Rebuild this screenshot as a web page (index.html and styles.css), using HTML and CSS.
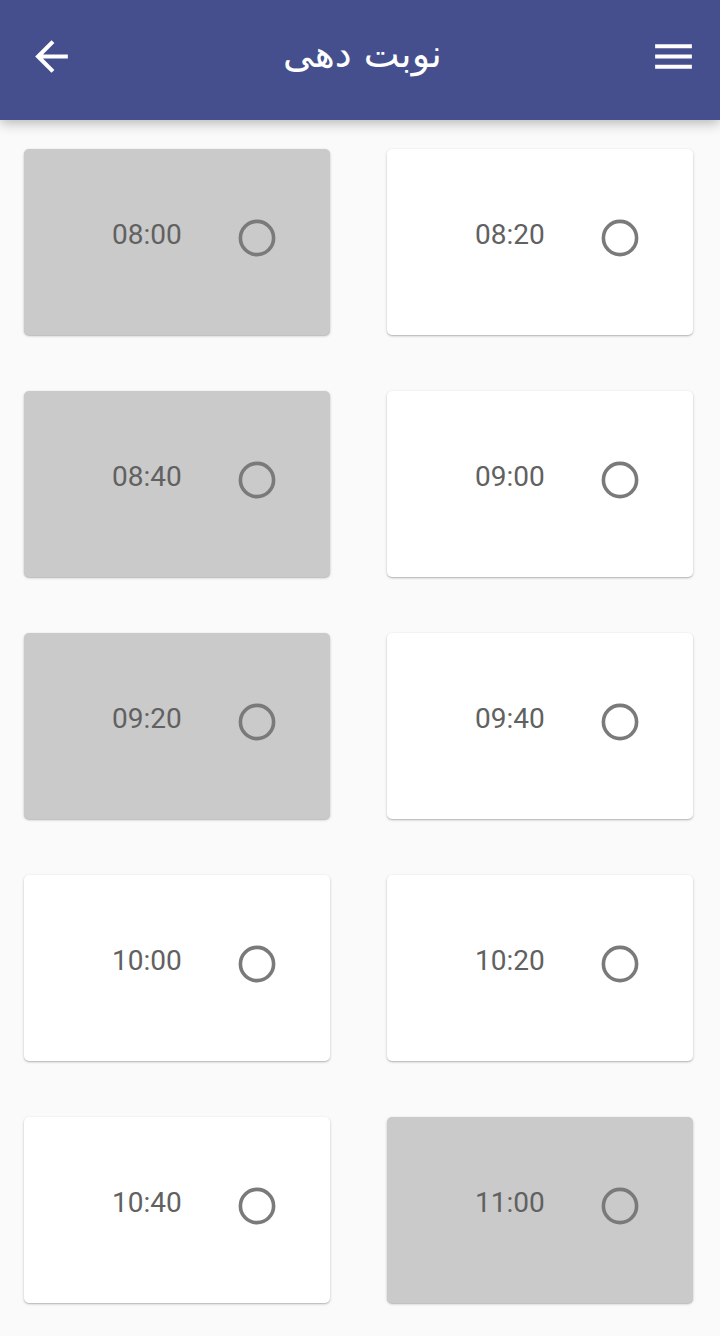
FILE: index.html
```html
<!DOCTYPE html>
<html lang="fa">
<head>
<meta charset="utf-8">
<title>نوبت دهی</title>
<link rel="stylesheet" href="styles.css">
</head>
<body>
<header class="appbar">
  <button class="icon-btn back" aria-label="back">
    <svg viewBox="0 0 24 24" width="49" height="49"><path fill="#fff" d="M20 11H7.83l5.59-5.59L12 4l-8 8 8 8 1.41-1.41L7.83 13H20v-2z"/></svg>
  </button>
  <h1 class="title">نوبت دهی</h1>
  <button class="icon-btn menu" aria-label="menu">
    <svg viewBox="0 0 24 24" width="49" height="49"><path fill="#fff" d="M3 18h18v-2H3v2zm0-5h18v-2H3v2zm0-7v2h18V6H3z"/></svg>
  </button>
</header>
<main class="grid">
  <div class="slot disabled"><span class="time">08:00</span><svg class="radio" viewBox="0 0 40 40" width="40" height="40"><circle cx="20" cy="20" r="16.6" fill="none" stroke="#7a7a7a" stroke-width="3.6"/></svg></div>
  <div class="slot"><span class="time">08:20</span><svg class="radio" viewBox="0 0 40 40" width="40" height="40"><circle cx="20" cy="20" r="16.6" fill="none" stroke="#7a7a7a" stroke-width="3.6"/></svg></div>
  <div class="slot disabled"><span class="time">08:40</span><svg class="radio" viewBox="0 0 40 40" width="40" height="40"><circle cx="20" cy="20" r="16.6" fill="none" stroke="#7a7a7a" stroke-width="3.6"/></svg></div>
  <div class="slot"><span class="time">09:00</span><svg class="radio" viewBox="0 0 40 40" width="40" height="40"><circle cx="20" cy="20" r="16.6" fill="none" stroke="#7a7a7a" stroke-width="3.6"/></svg></div>
  <div class="slot disabled"><span class="time">09:20</span><svg class="radio" viewBox="0 0 40 40" width="40" height="40"><circle cx="20" cy="20" r="16.6" fill="none" stroke="#7a7a7a" stroke-width="3.6"/></svg></div>
  <div class="slot"><span class="time">09:40</span><svg class="radio" viewBox="0 0 40 40" width="40" height="40"><circle cx="20" cy="20" r="16.6" fill="none" stroke="#7a7a7a" stroke-width="3.6"/></svg></div>
  <div class="slot"><span class="time">10:00</span><svg class="radio" viewBox="0 0 40 40" width="40" height="40"><circle cx="20" cy="20" r="16.6" fill="none" stroke="#7a7a7a" stroke-width="3.6"/></svg></div>
  <div class="slot"><span class="time">10:20</span><svg class="radio" viewBox="0 0 40 40" width="40" height="40"><circle cx="20" cy="20" r="16.6" fill="none" stroke="#7a7a7a" stroke-width="3.6"/></svg></div>
  <div class="slot"><span class="time">10:40</span><svg class="radio" viewBox="0 0 40 40" width="40" height="40"><circle cx="20" cy="20" r="16.6" fill="none" stroke="#7a7a7a" stroke-width="3.6"/></svg></div>
  <div class="slot disabled"><span class="time">11:00</span><svg class="radio" viewBox="0 0 40 40" width="40" height="40"><circle cx="20" cy="20" r="16.6" fill="none" stroke="#7a7a7a" stroke-width="3.6"/></svg></div>
</main>
</body>
</html>
```

FILE: styles.css
```css
* { box-sizing: border-box; }
html, body {
  margin: 0;
  padding: 0;
  background: #fafafa;
  font-family: Roboto, "DejaVu Sans", sans-serif;
}
.appbar {
  height: 120px;
  background: #454f8e;
  display: flex;
  align-items: center;
  justify-content: space-between;
  padding: 0 22px 0 27px;
  box-shadow: 0 3px 12px rgba(0,0,0,0.28);
  position: relative;
  z-index: 1;
}
.icon-btn {
  background: none;
  border: 0;
  padding: 0;
  width: 49px;
  height: 49px;
  display: flex;
  margin-top: -8px;
}
.title {
  margin: -10px 0 0 0;
  color: #fff;
  font-family: "DejaVu Sans", sans-serif;
  font-weight: normal;
  font-size: 38px;
  line-height: 1.2;
  direction: rtl;
}
.grid {
  display: grid;
  grid-template-columns: 306px 306px;
  column-gap: 57px;
  row-gap: 56px;
  padding: 29px 24px 30px 24px;
}
.slot {
  height: 186px;
  border-radius: 5px;
  background: #fff;
  box-shadow: 0 1px 3px rgba(0,0,0,0.2), 0 1px 1px rgba(0,0,0,0.12);
  display: flex;
  align-items: center;
  padding: 0 0 8px 88px;
}
.slot.disabled {
  background: #cacaca;
}
.time {
  font-family: Roboto, sans-serif;
  font-size: 28px;
  color: #616161;
  width: 73px;
  margin-bottom: 8px;
}
.radio {
  margin-left: 52px;
}
```
